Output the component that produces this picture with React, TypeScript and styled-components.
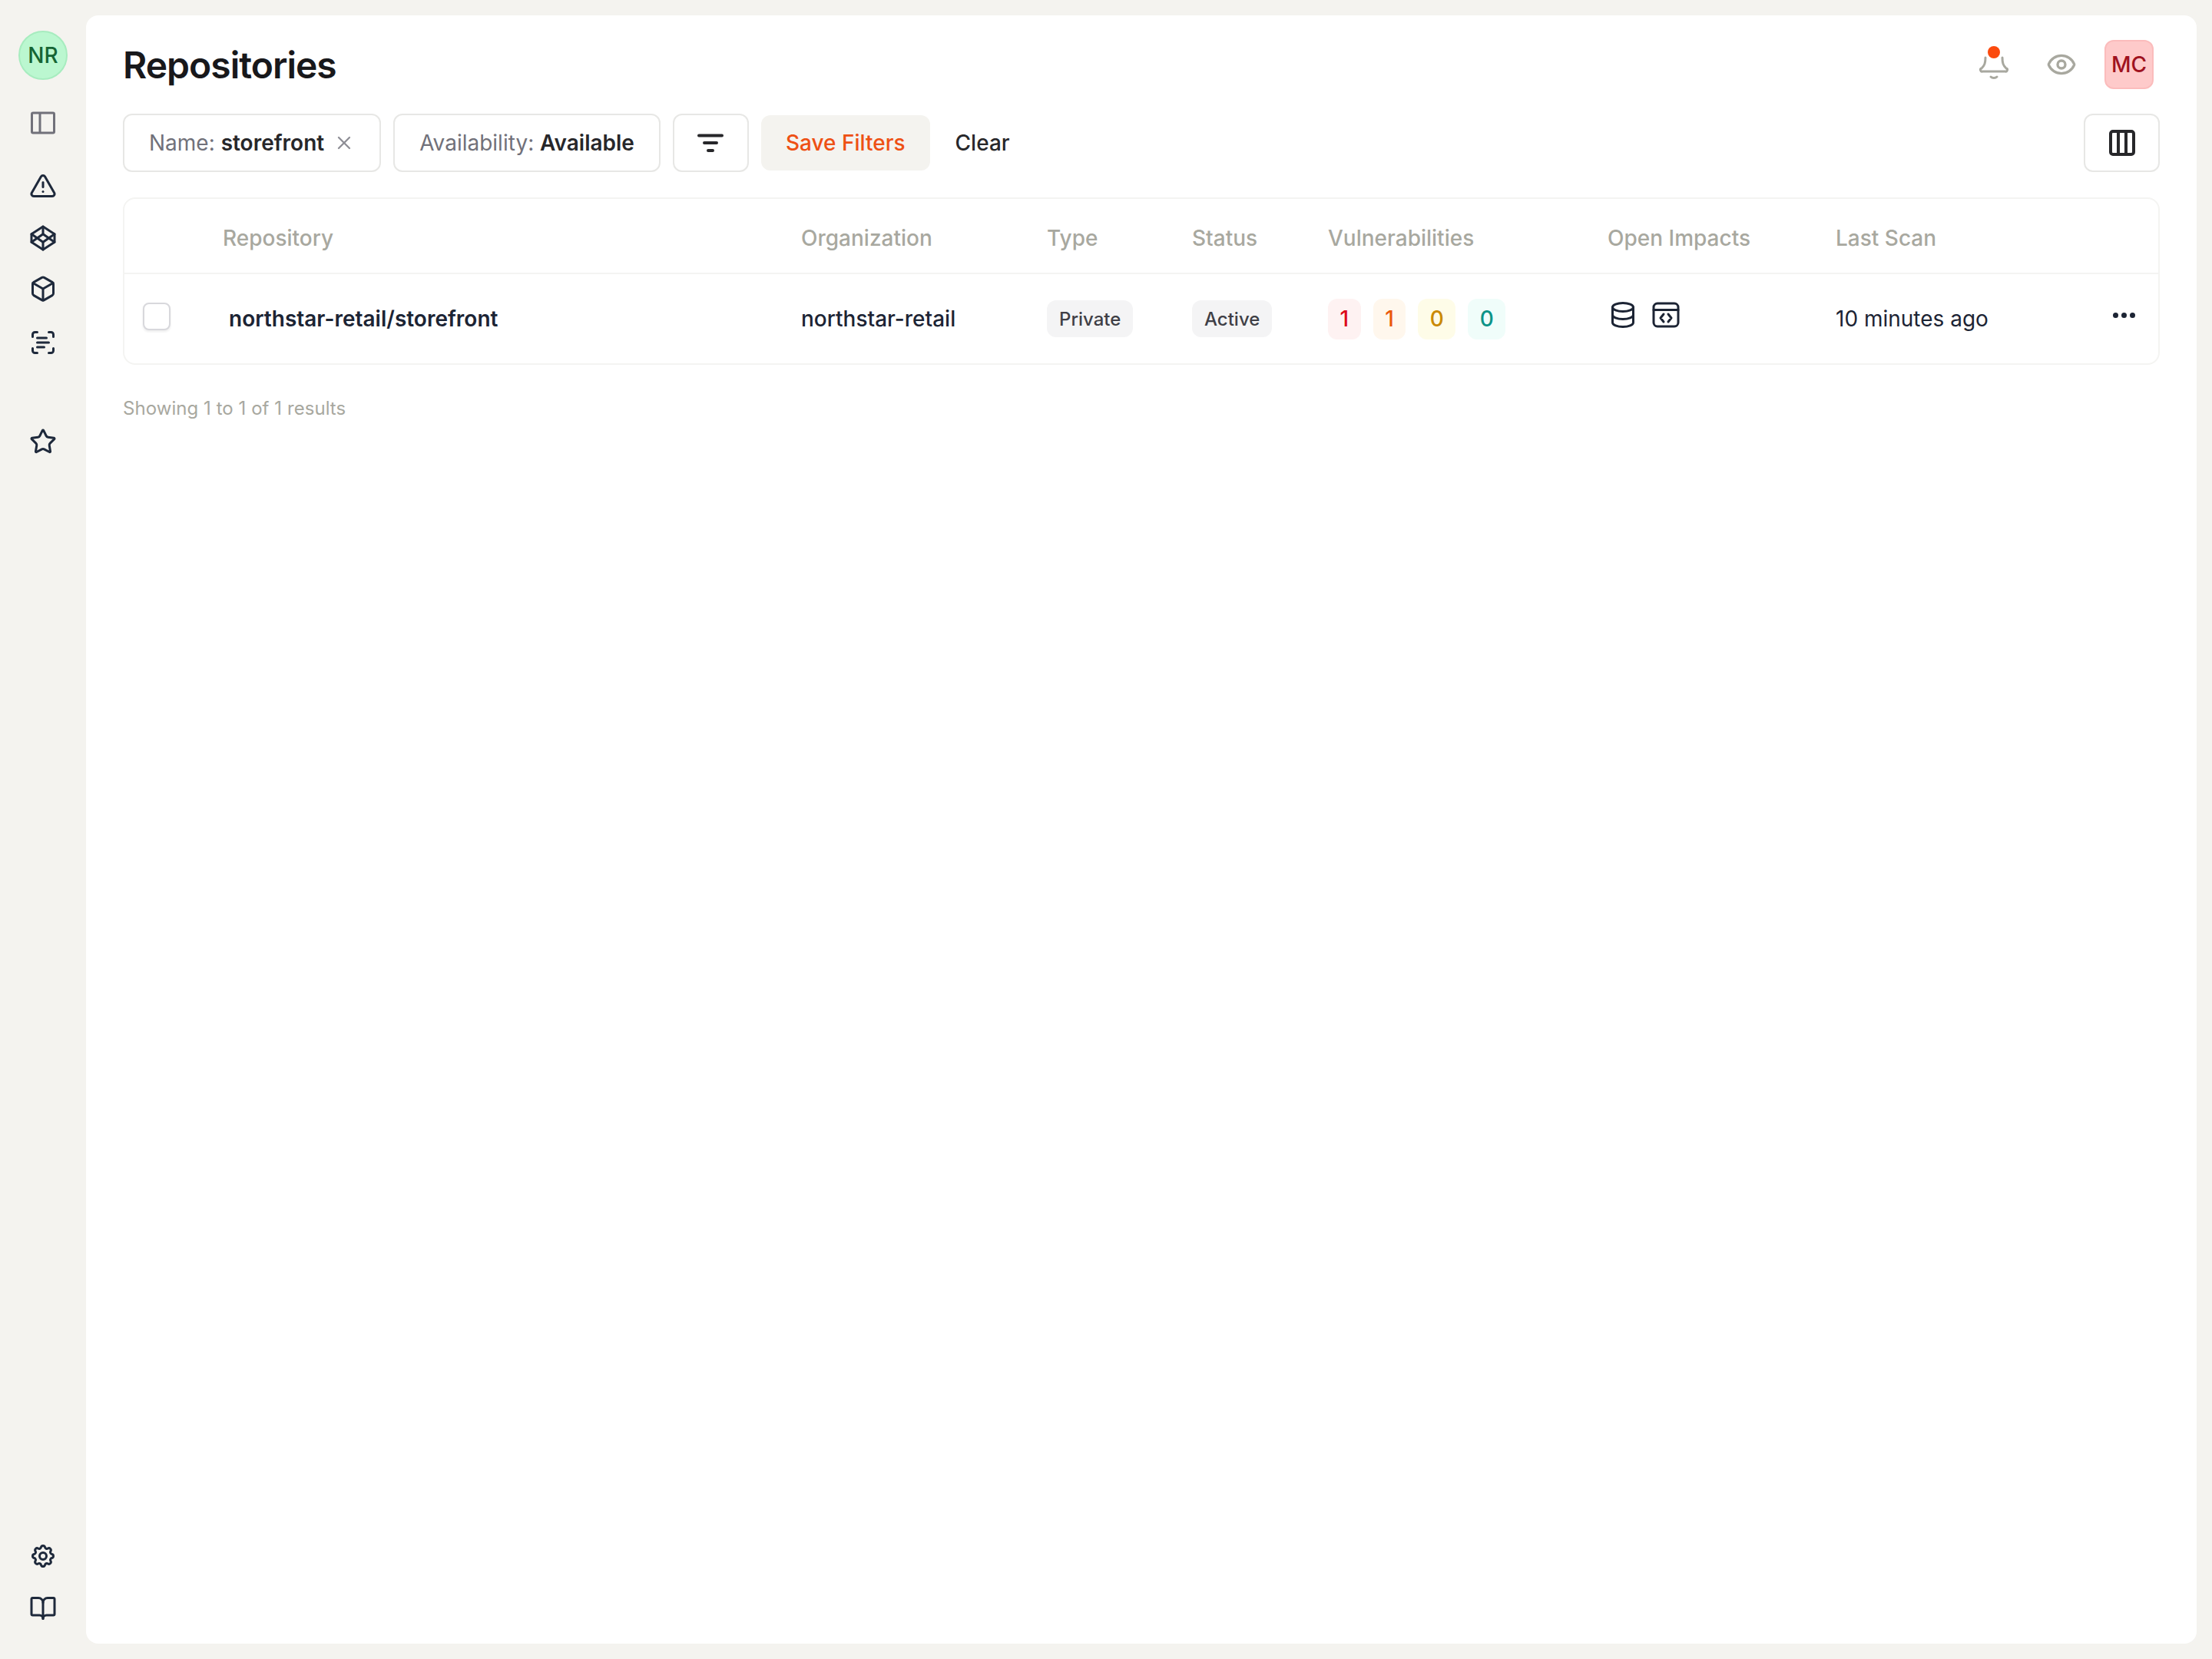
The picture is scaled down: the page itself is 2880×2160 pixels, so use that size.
import React from 'react';
import styled, { createGlobalStyle } from 'styled-components';
import { BookOpen, Box, Codepen, Eye, ScanText, Star, TriangleAlert, X } from 'lucide-react';
import { TbSettings } from 'react-icons/tb';

const GlobalStyle = createGlobalStyle`
    html, body {
        margin:0;
        padding:0;
        background:#f4f3ef;
        font-family:Inter, "Liberation Sans", sans-serif;
    }
    * { box-sizing:border-box; }
`;

const Shell = styled.div`
    display:flex;
    width:2880px;
    height:2160px;
    padding:20px 20px 20px 0;
`;

const Sidebar = styled.nav`
    width:112px;
    flex:none;
    display:flex;
    flex-direction:column;
    align-items:center;
    padding:20px 0 28px;
    color:#1e293b;
`;

const OrgAvatar = styled.div`
    width:64px;
    height:64px;
    flex:none;
    border-radius:50%;
    background:#bbf7d0;
    border:2px solid #a7ecbf;
    color:#166534;
    font-size:28px;
    font-weight:500;
    display:flex;
    align-items:center;
    justify-content:center;
`;

const NavSlot = styled.div<{ $gap: number; $muted?: boolean }>`
    height:36px;
    flex:none;
    margin-top:${(p) => p.$gap}px;
    display:flex;
    align-items:center;
    justify-content:center;
    color:${(p) => (p.$muted ? '#71717a' : 'inherit')};
`;

const NavSpacer = styled.div`
    flex:1;
`;

const Panel = styled.main`
    flex:1;
    min-width:0;
    background:#fff;
    border-radius:16px;
    padding:32px 48px;
`;

const TopRow = styled.header`
    display:flex;
    align-items:center;
    height:64px;
`;

const Title = styled.h1`
    margin:0;
    flex:1;
    font-size:48px;
    font-weight:600;
    letter-spacing:-1px;
    color:#18181b;
`;

const TopActions = styled.div`
    display:flex;
    align-items:center;
    margin-right:8px;
`;

const BellWrap = styled.div`
    position:relative;
    width:40px;
    height:44px;
    margin-right:48px;
`;

const BellDot = styled.span`
    position:absolute;
    top:-2px;
    left:12px;
    width:16px;
    height:16px;
    border-radius:50%;
    background:#fb4a0e;
`;

const EyeIcon = styled(Eye)`
    color:#a8a89f;
    margin-right:36px;
`;

const UserAvatar = styled.div`
    width:64px;
    height:64px;
    border-radius:12px;
    background:#fecaca;
    border:2px solid #fbbcbc;
    color:#9f1220;
    font-size:28px;
    font-weight:500;
    display:flex;
    align-items:center;
    justify-content:center;
`;

const Toolbar = styled.div`
    display:flex;
    align-items:center;
    margin-top:32px;
    height:76px;
`;

const Chip = styled.div`
    height:76px;
    padding:0 32px;
    margin-right:16px;
    background:#fff;
    border:2px solid #e7e7e5;
    border-radius:12px;
    display:flex;
    align-items:center;
    font-size:28px;
    color:#71717a;
    white-space:pre;
`;

const ChipValue = styled.span`
    color:#27272a;
    font-weight:600;
`;

const ChipClose = styled(X)`
    color:#8f8f96;
    margin-left:12px;
`;

const IconButton = styled.button<{ $push?: boolean }>`
    width:99px;
    height:76px;
    padding:0;
    margin-left:${(p) => (p.$push ? 'auto' : '0')};
    margin-right:${(p) => (p.$push ? '0' : '16px')};
    background:#fff;
    border:2px solid #e7e7e5;
    border-radius:12px;
    display:flex;
    align-items:center;
    justify-content:center;
    color:#27272a;
`;

const SaveButton = styled.button`
    height:72px;
    padding:0 32px;
    border:0;
    border-radius:12px;
    background:#f4f3ef;
    color:#ee5014;
    font-family:inherit;
    font-size:28px;
    font-weight:500;
`;

const ClearButton = styled.button`
    height:72px;
    padding:0;
    margin-left:33px;
    border:0;
    background:none;
    color:#27272a;
    font-family:inherit;
    font-size:28px;
    font-weight:500;
`;

const Table = styled.section`
    margin-top:33px;
    border:2px solid #f4f4f2;
    border-radius:16px;
`;

const COLUMNS = '128px 753px 320px 189px 177px 364px 297px 1fr';

const HeadRow = styled.div`
    display:grid;
    grid-template-columns:${COLUMNS};
    align-items:center;
    height:98px;
    padding-top:6px;
    border-bottom:2px solid #f4f4f2;
    font-size:28px;
    font-weight:500;
    color:#a8a89f;
`;

const BodyRow = styled.div`
    display:grid;
    grid-template-columns:${COLUMNS};
    align-items:center;
    height:116px;
    font-size:28px;
    color:#1c2434;
`;

const CheckCell = styled.div`
    padding-left:24px;
    margin-bottom:6px;
`;

const Checkbox = styled.span`
    display:block;
    width:36px;
    height:36px;
    border:2px solid #d8d8dc;
    border-radius:8px;
    background:#fff;
    box-shadow:0 2px 3px rgba(24,24,27,.08);
`;

const RepoName = styled.div`
    padding-left:8px;
    font-weight:600;
`;

const OrgName = styled.div`
    font-weight:500;
`;

const Tag = styled.span`
    display:inline-flex;
    align-items:center;
    height:48px;
    padding:0 16px;
    border-radius:12px;
    background:#f4f4f5;
    color:#3f3f46;
    font-size:24px;
    font-weight:500;
`;

const Counts = styled.div`
    display:flex;
    gap:16px;
`;

const Count = styled.span<{ $bg: string; $fg: string }>`
    height:53px;
    padding:0 15.5px;
    border-radius:12px;
    display:flex;
    align-items:center;
    background:${(p) => p.$bg};
    color:${(p) => p.$fg};
    font-weight:500;
`;

const Impacts = styled.div`
    display:flex;
    align-items:center;
    gap:19px;
    margin:0 0 10px 2px;
`;

const LastCell = styled.div`
    display:flex;
    align-items:center;
    justify-content:space-between;
    padding-right:30px;
`;

const RowMenu = styled.div`
    display:flex;
    gap:4px;
    margin-bottom:10px;
`;

const MenuDot = styled.span`
    width:7px;
    height:7px;
    border-radius:50%;
    background:#1c2434;
`;

const ResultCount = styled.p`
    margin:41px 0 0;
    font-size:24px;
    letter-spacing:0.05px;
    line-height:32px;
    color:#a8a89f;
`;

const VULNS = [
    { value: 1, bg: '#fef2f2', fg: '#dc0a1a' },
    { value: 1, bg: '#fff7ed', fg: '#ea580c' },
    { value: 0, bg: '#fefce8', fg: '#ca8a04' },
    { value: 0, bg: '#f0fdfa', fg: '#0d9488' },
];

const NAV_SIZE = 36;

const App: React.FC = () => {
    return <Shell>
        <GlobalStyle />
        <Sidebar>
            <OrgAvatar>NR</OrgAvatar>
            <NavSlot $gap={38} $muted>
                <svg width="36" height="36" viewBox="0 0 36 36" fill="none" stroke="currentColor" strokeWidth="3" strokeLinejoin="round">
                    <rect x="3.5" y="5" width="29" height="26" rx="1.5" />
                    <path d="M14 5v26" />
                </svg>
            </NavSlot>
            <NavSlot $gap={46}><TriangleAlert size={NAV_SIZE} strokeWidth={2} /></NavSlot>
            <NavSlot $gap={32}><Codepen size={NAV_SIZE} strokeWidth={2} /></NavSlot>
            <NavSlot $gap={30}><Box size={NAV_SIZE} strokeWidth={2} /></NavSlot>
            <NavSlot $gap={34}><ScanText size={NAV_SIZE} strokeWidth={2} /></NavSlot>
            <NavSlot $gap={93}><Star size={NAV_SIZE} strokeWidth={2} /></NavSlot>
            <NavSpacer />
            <NavSlot $gap={0}><TbSettings size={NAV_SIZE} strokeWidth={2} /></NavSlot>
            <NavSlot $gap={32}><BookOpen size={NAV_SIZE} strokeWidth={2} /></NavSlot>
        </Sidebar>
        <Panel>
            <TopRow>
                <Title>Repositories</Title>
                <TopActions>
                    <BellWrap>
                        <svg width="40" height="44" viewBox="0 0 40 44" fill="none" stroke="#a8a89f" strokeWidth="3" strokeLinecap="round" strokeLinejoin="round">
                            <path d="M9 13c0 7-1 10-5 14a2 2 0 0 0 1 4h30a2 2 0 0 0 1-4c-4-4-5-7-5-14" />
                            <path d="M16 38c2 2 6 2 8 0" />
                        </svg>
                        <BellDot />
                    </BellWrap>
                    <EyeIcon size={40} strokeWidth={2} />
                    <UserAvatar>MC</UserAvatar>
                </TopActions>
            </TopRow>
            <Toolbar>
                <Chip>Name: <ChipValue>storefront</ChipValue><ChipClose size={28} strokeWidth={2} /></Chip>
                <Chip>Availability: <ChipValue>Available</ChipValue></Chip>
                <IconButton>
                    <svg width="36" height="36" viewBox="0 0 36 36" fill="none" stroke="currentColor" strokeWidth="4" strokeLinecap="round">
                        <path d="M3 8.5h30M10 18h16M15 28h6" />
                    </svg>
                </IconButton>
                <SaveButton>Save Filters</SaveButton>
                <ClearButton>Clear</ClearButton>
                <IconButton $push>
                    <svg width="40" height="40" viewBox="0 0 40 40" fill="none" stroke="currentColor" strokeWidth="4" strokeLinejoin="round">
                        <rect x="5" y="5" width="30" height="30" rx="3" />
                        <path d="M15 5v30M25 5v30" />
                    </svg>
                </IconButton>
            </Toolbar>
            <Table>
                <HeadRow>
                    <div />
                    <div>Repository</div>
                    <div>Organization</div>
                    <div>Type</div>
                    <div>Status</div>
                    <div>Vulnerabilities</div>
                    <div>Open Impacts</div>
                    <div>Last Scan</div>
                </HeadRow>
                <BodyRow>
                    <CheckCell><Checkbox /></CheckCell>
                    <RepoName>northstar-retail/storefront</RepoName>
                    <OrgName>northstar-retail</OrgName>
                    <div><Tag>Private</Tag></div>
                    <div><Tag>Active</Tag></div>
                    <Counts>
                        {VULNS.map((v, i) => <Count key={i} $bg={v.bg} $fg={v.fg}>{v.value}</Count>)}
                    </Counts>
                    <Impacts>
                        <svg width="36" height="36" viewBox="0 0 36 36" fill="none" stroke="currentColor" strokeWidth="3" strokeLinecap="round" strokeLinejoin="round">
                            <ellipse cx="18" cy="8" rx="13.5" ry="5.5" />
                            <path d="M4.5 8v20c0 3 6 5.5 13.5 5.5s13.5-2.5 13.5-5.5V8" />
                            <path d="M4.5 18c0 3 6 5.5 13.5 5.5s13.5-2.5 13.5-5.5" />
                        </svg>
                        <svg width="38" height="38" viewBox="0 0 38 38" fill="none" stroke="currentColor" strokeWidth="3" strokeLinecap="round" strokeLinejoin="round">
                            <rect x="3" y="4" width="32" height="30" rx="5" />
                            <path d="M3 12.5h32M16 18l-4 5 4 5M22 18l4 5-4 5" />
                        </svg>
                    </Impacts>
                    <LastCell>
                        <span>10 minutes ago</span>
                        <RowMenu><MenuDot /><MenuDot /><MenuDot /></RowMenu>
                    </LastCell>
                </BodyRow>
            </Table>
            <ResultCount>Showing 1 to 1 of 1 results</ResultCount>
        </Panel>
    </Shell>
}

export default App;
